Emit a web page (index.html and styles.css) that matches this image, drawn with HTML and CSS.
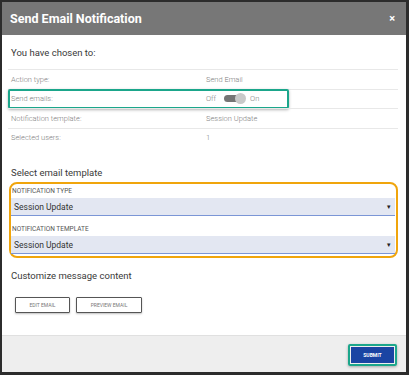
FILE: index.html
```html
<html>
	<head>
		<meta name="viewport" content="width=device-width, initial-scale=1.0">
		<link rel="stylesheet" href="styles.css">
	</head>
	<body>
		<div class='modal'>
			<div class='modal-header'>
				<span class='modal-title'>Send Email Notification</span>
				<span class='close'>&times;</span>
			</div>
			<div class='modal-body'>
				<div class='heading first'>You have chosen to:</div>
				<div class='summary'>
					<div class='row'>
						<span class='label'>Action type:</span>
						<span class='value'>Send Email</span>
					</div>
					<div class='row highlight'>
						<span class='label'>Send emails:</span>
						<span class='value toggle-wrap'>
							Off
							<span class='toggle'><span class='knob'></span></span>
							On
						</span>
					</div>
					<div class='row'>
						<span class='label'>Notification template:</span>
						<span class='value'>Session Update</span>
					</div>
					<div class='row'>
						<span class='label'>Selected users:</span>
						<span class='value'>1</span>
					</div>
				</div>

				<div class='heading second'>Select email template</div>
				<div class='template-box'>
					<div class='field-label'>Notification type</div>
					<div class='select'>
						<span>Session Update</span>
						<span class='arrow'>&#9662;</span>
					</div>
					<div class='field-label tall'>Notification template</div>
					<div class='select'>
						<span>Session Update</span>
						<span class='arrow'>&#9662;</span>
					</div>
				</div>

				<div class='heading third'>Customize message content</div>
				<div class='actions'>
					<button class='btn-outline edit'>Edit email</button>
					<button class='btn-outline preview'>Preview email</button>
				</div>
			</div>
			<div class='modal-footer'>
				<div class='submit-ring'>
					<button class='btn-submit'>Submit</button>
				</div>
			</div>
		</div>
	</body>
</html>
```

FILE: styles.css
```css
html, body {
	margin: 0;
	height: 375px;
	background: #fff;
}

body {
	font-family: Roboto, "Liberation Sans", sans-serif;
}

.modal {
	width: 409px;
	height: 375px;
	box-sizing: border-box;
	border: 2px solid #2c2c2c;
	border-right-width: 3px;
	border-bottom-width: 3px;
	display: flex;
	flex-direction: column;
	overflow: hidden;
}

.modal-header {
	height: 33px;
	flex: none;
	background: #777777;
	color: #fff;
	display: flex;
	align-items: center;
	justify-content: space-between;
	padding: 0 11px 0 8px;
}
.modal-title {
	font-size: 12.5px;
	font-weight: 700;
}
.close {
	font-size: 11px;
	font-weight: 700;
	line-height: 1;
}

.modal-body {
	flex: 1;
	padding: 10px 8px 0 6px;
}

.heading {
	font-size: 9.5px;
	line-height: 16px;
	height: 16px;
	color: #3a3a3a;
	padding-left: 3px;
}
.heading.first { margin-bottom: 8px; }
.heading.second { margin: 18px 0 1px; }
.heading.third { margin: 10px 0 0; }

.row {
	position: relative;
	display: flex;
	align-items: center;
	height: 18.5px;
	border-top: 1px solid #e8e8e8;
	font-size: 7.5px;
	font-weight: 300;
	color: #808080;
}
.label {
	width: 195px;
	padding-left: 3px;
}
.value {
	display: flex;
	align-items: center;
}
.highlight::after {
	content: '';
	position: absolute;
	left: 0;
	top: -1px;
	width: 277px;
	height: 16px;
	border: 2px solid #1ba68b;
	border-radius: 2px;
	box-shadow: 0 1px 3px rgba(0, 0, 0, 0.3);
}
.toggle {
	position: relative;
	display: inline-block;
	width: 17px;
	height: 7px;
	margin: 0 9px 0 8px;
	background: #757575;
	border-radius: 4px;
}
.knob {
	position: absolute;
	right: -5px;
	top: -2px;
	width: 11px;
	height: 11px;
	border-radius: 50%;
	background: #c9c9c9;
}

.template-box {
	margin-left: 1px;
	height: 72px;
	border: 2px solid #f0a50c;
	border-radius: 8px;
	padding: 0 1px 0 0;
}
.field-label {
	height: 14px;
	box-sizing: border-box;
	display: flex;
	align-items: flex-end;
	padding: 0 0 3px 1px;
	font-size: 6.5px;
	text-transform: uppercase;
	color: #555;
}
.field-label.tall {
	height: 20px;
	padding-bottom: 3px;
}
.select {
	height: 18px;
	box-sizing: border-box;
	background: #e3e7f2;
	border-bottom: 1px solid #7b96d6;
	display: flex;
	align-items: center;
	justify-content: space-between;
	padding: 0 4px 0 3px;
	font-size: 8.5px;
	color: #333;
}
.arrow {
	font-size: 7px;
	color: #222;
}

.actions {
	display: flex;
	gap: 6px;
	margin: 13px 0 0 7px;
}
.btn-outline {
	height: 16px;
	padding: 0;
	background: #fff;
	border: 1.5px solid #555;
	border-radius: 1px;
	box-shadow: 0 1px 2px rgba(0, 0, 0, 0.25);
	font-family: Roboto, sans-serif;
	font-size: 5px;
	text-transform: uppercase;
	color: #777;
}
.edit { width: 55px; }
.preview { width: 66px; }

.modal-footer {
	height: 37px;
	flex: none;
	box-sizing: border-box;
	background: #eeeeee;
	border-top: 1px solid #e0e0e0;
	display: flex;
	align-items: center;
	justify-content: flex-end;
	padding: 2px 9px 0 0;
}
.submit-ring {
	padding: 1px;
	border: 2px solid #1ba68b;
	border-radius: 2px;
	box-shadow: 0 1px 3px rgba(0, 0, 0, 0.3);
	display: flex;
}
.btn-submit {
	width: 43px;
	height: 16px;
	padding: 0;
	border: none;
	background: #1a44a3;
	color: #fff;
	font-family: Roboto, sans-serif;
	font-size: 5px;
	font-weight: 700;
	text-transform: uppercase;
}
```
